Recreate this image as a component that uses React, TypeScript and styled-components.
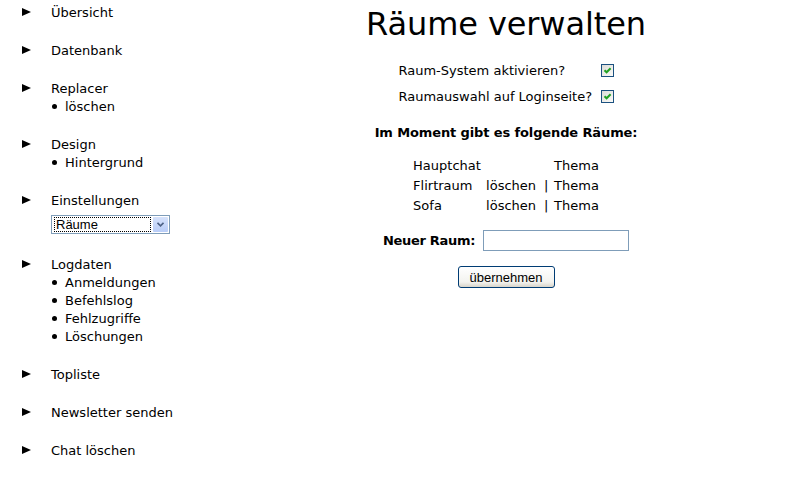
import React from 'react'
import styled, { createGlobalStyle } from 'styled-components'

const GlobalStyle = createGlobalStyle`
  html, body {
    margin: 0;
    padding: 0;
    background: #fff;
  }
  body {
    font-family: 'DejaVu Sans', Verdana, sans-serif;
    font-size: 13px;
    color: #000;
  }
`

const Page = styled.div`
  display: flex;
  width: 795px;
  min-height: 485px;
`

const Sidebar = styled.nav`
  width: 217px;
  flex-shrink: 0;
  padding-top: 3px;
`

const Group = styled.div`
  margin-bottom: 20px;
`

const Heading = styled.div`
  display: flex;
  align-items: center;
  height: 18px;
  padding-left: 22px;
`

const Arrow = styled.span`
  width: 0;
  height: 0;
  border-top: 4px solid transparent;
  border-bottom: 4px solid transparent;
  border-left: 9px solid #000;
  margin-right: 20px;
`

const SubItem = styled.div`
  display: flex;
  align-items: center;
  height: 18px;
  padding-left: 52px;
`

const Bullet = styled.span`
  width: 5px;
  height: 5px;
  border-radius: 50%;
  background: #000;
  margin-right: 8px;
`

const SelectRow = styled.div`
  height: 26px;
  box-sizing: border-box;
  padding: 6px 0 0 51px;
`

const FakeSelect = styled.div`
  display: flex;
  width: 119px;
  height: 19px;
  box-sizing: border-box;
  border: 1px solid #7f9db9;
  background: #fff;
  font-family: 'Liberation Sans', Arial, sans-serif;
  font-size: 13px;
`

const SelectValue = styled.div`
  flex: 1;
  margin: 1px 1px 1px 2px;
  border: 1px dotted #000;
  padding-left: 1px;
  line-height: 13px;
`

const SelectButton = styled.div`
  width: 15px;
  margin: 1px;
  display: flex;
  align-items: center;
  justify-content: center;
  background: linear-gradient(#d6e2fb, #b9cdf8);
  border-radius: 1px;
`

const Main = styled.main`
  flex: 1;
  display: flex;
  flex-direction: column;
  align-items: center;
`

const Title = styled.h1`
  margin: 5px 0 0;
  font-size: 32px;
  line-height: 38px;
  font-weight: normal;
  letter-spacing: -0.1px;
`

const OptionsTable = styled.div`
  display: grid;
  grid-template-columns: 202px 13px;
  grid-auto-rows: 26px;
  align-items: center;
  margin-top: 14px;
`

const CheckBox = styled.span`
  display: flex;
  align-items: center;
  justify-content: center;
  width: 13px;
  height: 13px;
  box-sizing: border-box;
  border: 1px solid #1c5180;
  background: linear-gradient(135deg, #dcdcd7, #fbfbf9);
`

const SubTitle = styled.div`
  margin-top: 15px;
  line-height: 18px;
  font-weight: bold;
  letter-spacing: -0.12px;
`

const RoomTable = styled.div`
  display: grid;
  grid-template-columns: 73px 58px 10px auto;
  grid-auto-rows: 20px;
  align-items: center;
  margin-top: 13px;
`

const NewRoom = styled.div`
  display: flex;
  align-items: center;
  gap: 8px;
  margin-top: 15px;
`

const NewRoomLabel = styled.span`
  font-weight: bold;
  letter-spacing: -0.3px;
`

const TextInput = styled.input`
  width: 146px;
  height: 21px;
  box-sizing: border-box;
  border: 1px solid #7f9db9;
  margin: 0;
  padding: 1px 2px;
`

const Button = styled.button`
  margin-top: 15px;
  width: 97px;
  height: 22px;
  padding: 0;
  border: 1px solid #003c74;
  border-radius: 3px;
  background: linear-gradient(#ffffff, #f3f3ef 75%, #d8d4c9);
  font-family: 'Liberation Sans', Arial, sans-serif;
  font-size: 13px;
  color: #000;
`

const nav = [
  { label: 'Übersicht' },
  { label: 'Datenbank' },
  { label: 'Replacer', subs: ['löschen'] },
  { label: 'Design', subs: ['Hintergrund'] },
  { label: 'Einstellungen', select: 'Räume' },
  { label: 'Logdaten', subs: ['Anmeldungen', 'Befehlslog', 'Fehlzugriffe', 'Löschungen'] },
  { label: 'Topliste' },
  { label: 'Newsletter senden' },
  { label: 'Chat löschen' }
]

const rooms = [
  { name: 'Hauptchat', deletable: false },
  { name: 'Flirtraum', deletable: true },
  { name: 'Sofa', deletable: true }
]

const Check = () => (
  <CheckBox>
    <svg width="9" height="9" viewBox="0 0 9 9">
      <path d="M1.5 4.2 L3.6 6.3 L7.6 2.2" fill="none" stroke="#21a121" strokeWidth="2" />
    </svg>
  </CheckBox>
)

const App = () => {
  return (
    <Page>
      <GlobalStyle />
      <Sidebar>
        {nav.map(item => (
          <Group key={item.label}>
            <Heading>
              <Arrow />
              {item.label}
            </Heading>
            {item.subs && item.subs.map(sub => (
              <SubItem key={sub}>
                <Bullet />
                {sub}
              </SubItem>
            ))}
            {item.select && (
              <SelectRow>
                <FakeSelect>
                  <SelectValue>{item.select}</SelectValue>
                  <SelectButton>
                    <svg width="7" height="5" viewBox="0 0 7 5">
                      <path d="M0.5 0.8 L3.5 3.8 L6.5 0.8" fill="none" stroke="#4d6185" strokeWidth="1.6" />
                    </svg>
                  </SelectButton>
                </FakeSelect>
              </SelectRow>
            )}
          </Group>
        ))}
      </Sidebar>
      <Main>
        <Title>Räume verwalten</Title>
        <OptionsTable>
          <span>Raum-System aktivieren?</span>
          <Check />
          <span>Raumauswahl auf Loginseite?</span>
          <Check />
        </OptionsTable>
        <SubTitle>Im Moment gibt es folgende Räume:</SubTitle>
        <RoomTable>
          {rooms.map(room => (
            <React.Fragment key={room.name}>
              <span>{room.name}</span>
              <span>{room.deletable ? 'löschen' : ''}</span>
              <span>{room.deletable ? '|' : ''}</span>
              <span>Thema</span>
            </React.Fragment>
          ))}
        </RoomTable>
        <NewRoom>
          <NewRoomLabel>Neuer Raum:</NewRoomLabel>
          <TextInput type="text" />
        </NewRoom>
        <Button>übernehmen</Button>
      </Main>
    </Page>
  )
}

export default App
